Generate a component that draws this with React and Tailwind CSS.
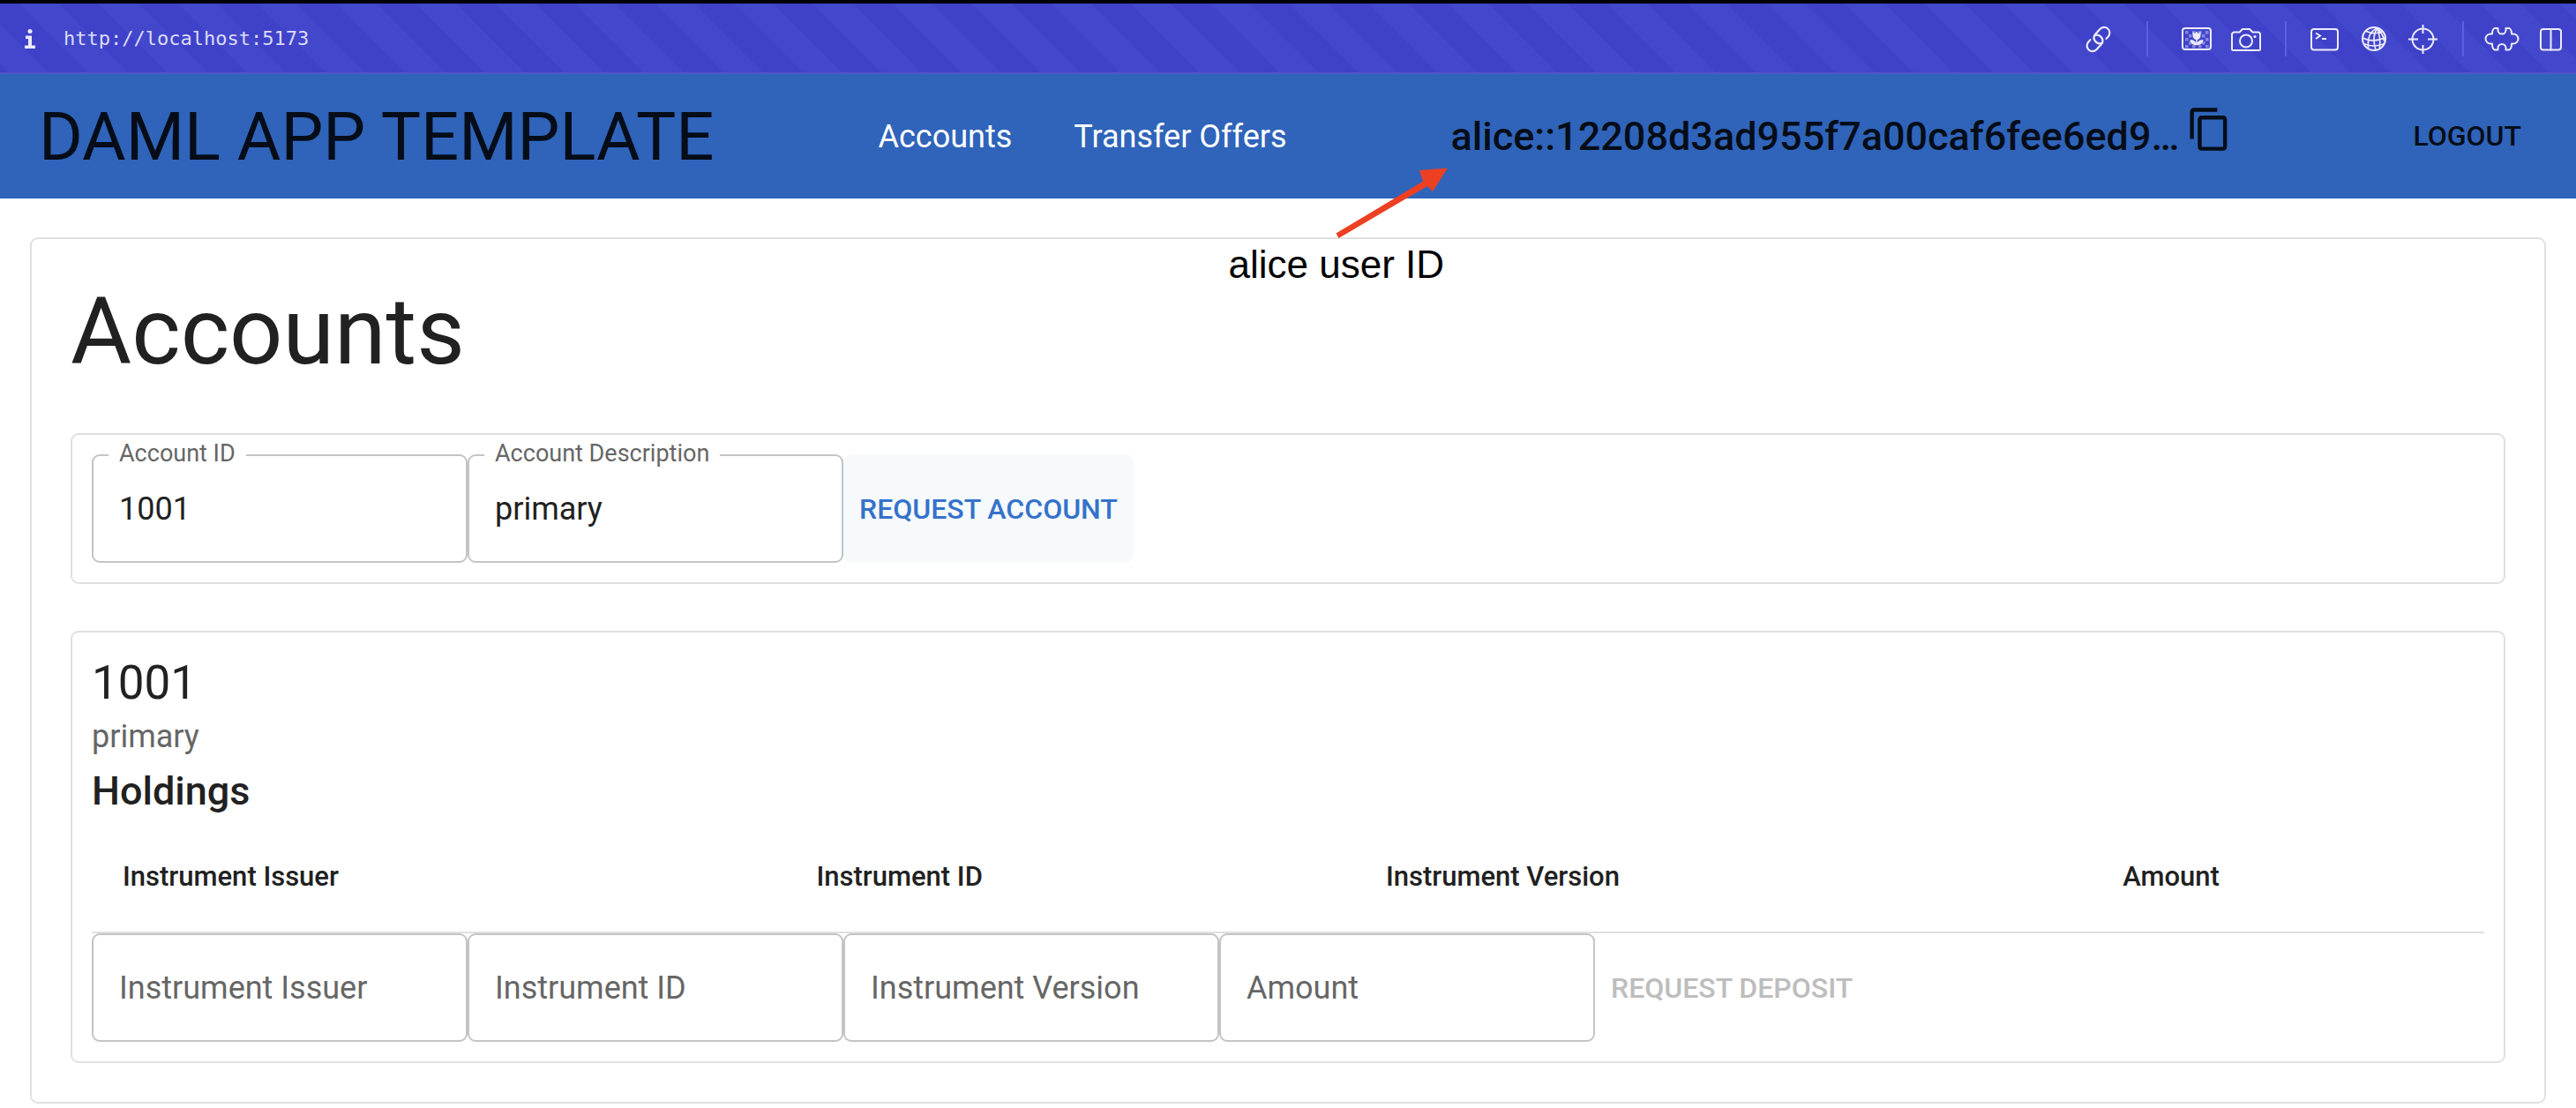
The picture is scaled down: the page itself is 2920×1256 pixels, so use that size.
import React from "react";

function ToolButton({ label, width, className = "", children }) {
  return (
    <button type="button" aria-label={label} className={"shrink-0 " + className}>
      <svg
        width={width}
        height="34"
        viewBox={`0 0 ${width} 34`}
        fill="none"
        stroke="currentColor"
        strokeWidth="2"
        strokeLinecap="round"
        strokeLinejoin="round"
        className="block overflow-visible"
      >
        {children}
      </svg>
    </button>
  );
}

function Divider() {
  return <span className="h-10 w-0.5 shrink-0 bg-[#5b60e3]" />;
}

const checkers = [
  [4, 8], [12, 8], [19, 8], [27, 8],
  [8, 12], [23, 12],
  [4, 16], [27, 16],
  [8, 20], [23, 20],
  [4, 24], [12, 24], [19, 24], [27, 24],
];

function BrowserBar() {
  return (
    <div className="border-t-4 border-black">
      <div className="flex h-20 items-center justify-between border-b-2 border-[#4f55cb] bg-[linear-gradient(45deg,#4347cc_25%,#3f42c8_25%_50%,#4347cc_50%_75%,#3f42c8_75%)] bg-[length:90px_90px] bg-[position:left_10px_bottom_0px] pt-0.5 pr-4 pl-7 text-[#ecebfc]">
        <div className="flex items-center gap-8">
          <svg width="12" height="24" viewBox="0 0 12 24" fill="currentColor" role="img" aria-label="Site information">
            <circle cx="6" cy="3.4" r="2.5" />
            <path d="M1 8.5h7v11h4V23H0v-3.500h4V12H1z" />
          </svg>
          <span className="font-['DejaVu_Sans_Mono',monospace] text-[22px] leading-8 text-[#dcdbf9]">
            http://localhost:5173
          </span>
        </div>

        <div className="flex items-center">
          <ToolButton label="Copy link" width={29} className="mr-10">
            <g transform="translate(14.500 17.500) rotate(-48)" strokeWidth="2.200">
              <path d="M-6.500 -6.300H-9.800A6.300 6.300 0 0 0 -9.800 6.300H-2A6.300 6.300 0 0 0 0 -5.900" />
              <path d="M6.500 6.300H9.800A6.300 6.300 0 0 0 9.800 -6.300H2A6.300 6.300 0 0 0 0 5.900" />
            </g>
          </ToolButton>
          <Divider />
          <ToolButton label="Toggle images" width={34} className="mr-[22px] ml-[38px]">
            <rect x="1" y="5" width="32" height="24" rx="3" />
            <g fill="currentColor" stroke="none">
              <g opacity="0.4">
                {checkers.map(([x, y]) => (
                  <rect key={`${x}-${y}`} x={x} y={y} width="3.500" height="3.500" />
                ))}
              </g>
              <path d="M12.500 9l2.500 2 2-2.500 2 2.500 2.500-2v4.500a4.500 4.500 0 0 1-9 0z" />
              <path d="M16.200 16h1.600v5.500c1-2.500 3.500-3.500 6.700-3.500-.5 4-3 6-6.700 6.200h-1.600C12.500 24 10 22 9.500 18c3.200 0 5.700 1 6.700 3.500z" />
            </g>
          </ToolButton>
          <ToolButton label="Take screenshot" width={34} className="mr-[27px]">
            <path d="M3.500 9.500H9.500L13 6h8l3.500 3.500h6A2.500 2.500 0 0 1 33 12v16.500A1.500 1.500 0 0 1 31.500 30h-29A1.500 1.500 0 0 1 1 28.500V12A2.500 2.500 0 0 1 3.500 9.500z" />
            <circle cx="17" cy="19.500" r="7" />
            <circle cx="27" cy="14.500" r="1.600" fill="currentColor" stroke="none" />
          </ToolButton>
          <Divider />
          <ToolButton label="Open console" width={32} className="mr-[26px] ml-[27px]">
            <rect x="1" y="6" width="30" height="23.500" rx="3" />
            <path d="M6 10.500l5 3-5 3.500M13 17h5" strokeLinecap="butt" strokeLinejoin="miter" />
          </ToolButton>
          <ToolButton label="Network" width={28} className="mr-[25px]">
            <circle cx="14" cy="17" r="13" />
            <path strokeWidth="1.700" d="M17.500 5C10 8 6.500 15 7.500 27M17.500 5c-4 6-4.500 15-1.500 25M17.500 5c2 5 4 13 3 22M17.500 5c4 3 7 8 8 14M5.500 8.500c5 2.500 12 2.500 17 .5M1.500 16c7 4 17 4 25-.5M3.500 23c6 2.500 14 2.500 21 0" />
          </ToolButton>
          <ToolButton label="Inspect element" width={33} className="mr-7">
            <circle cx="16.500" cy="17.500" r="12" />
            <path strokeLinecap="butt" d="M16.500 1v10M16.500 24v10M0 17.500h11M22 17.500h11" />
          </ToolButton>
          <Divider />
          <ToolButton label="Extensions" width={38} className="mx-6">
            <path d="M14.500 5H10.500Q8 6.500 8 11.500H6A5.500 5.500 0 0 0 6 22.500H8Q8 28.500 11 29.500H14.500V27.500A4.300 4.300 0 0 1 23.500 27.500V29.500H27Q30 28.500 30 22.500H32A5.500 5.500 0 0 0 32 11.500H30Q30 6.500 27.500 5H23.500V7A4.300 4.300 0 0 1 14.500 7z" />
          </ToolButton>
          <ToolButton label="Toggle panel" width={25}>
            <rect x="1" y="6" width="23" height="23.500" rx="3" />
            <path d="M12.500 6v23.500" />
          </ToolButton>
        </div>
      </div>
    </div>
  );
}

function Annotation() {
  return (
    <div className="pointer-events-none absolute top-[67px] right-full w-64">
      <svg width="256" height="88" viewBox="0 0 256 88" fill="#ed4023" className="block overflow-visible" aria-hidden="true">
        <path d="M125.500 77.500L224 18.500L220 6L252 3.500L235 30L229 24L128.500 83z" />
      </svg>
      <p className="pl-1 font-['Liberation_Sans',sans-serif] text-[44px] leading-[50px] font-normal whitespace-nowrap text-black">
        alice user ID
      </p>
    </div>
  );
}

function AppHeader() {
  return (
    <header className="flex h-[141px] items-center justify-between bg-[#2f64ba] px-11 text-[#060d18]">
      <span className="text-[76px] leading-[88px]">DAML APP TEMPLATE</span>
      <nav className="flex gap-[70px] text-[36px] leading-[54px] text-white">
        <a href="#accounts">Accounts</a>
        <a href="#transfer-offers">Transfer Offers</a>
      </nav>
      <div className="relative flex items-start gap-2 text-[45px] leading-[70px] font-medium">
        <span>alice::12208d3ad955f7a00caf6fee6ed9…</span>
        <button type="button" aria-label="Copy user ID">
          <svg width="53" height="53" viewBox="0 0 24 24" fill="currentColor" className="block">
            <path d="M16 1H4c-1.100 0-2 .9-2 2v14h2V3h12V1zm3 4H8c-1.100 0-2 .9-2 2v14c0 1.100.9 2 2 2h11c1.100 0 2-.9 2-2V7c0-1.100-.9-2-2-2zm0 16H8V7h11v14z" />
          </svg>
        </button>
        <Annotation />
      </div>
      <button type="button" className="px-[18px] text-[32px] leading-[53px] font-medium">
        LOGOUT
      </button>
    </header>
  );
}

const fieldBox =
  "block h-[123px] w-[426px] rounded-[9px] border-2 border-[#c4c4c4] bg-transparent px-[29px] text-[36px] text-[#212121] placeholder:text-[#666] placeholder:opacity-100";

function FilledField({ id, label, value }) {
  return (
    <div className="relative">
      <input id={id} type="text" defaultValue={value} className={fieldBox} />
      <label htmlFor={id} className="absolute -top-4 left-[19px] bg-white px-3 text-[27px] leading-[30px] whitespace-nowrap text-[#666]">
        {label}
      </label>
    </div>
  );
}

function EmptyField({ label }) {
  return <input type="text" aria-label={label} placeholder={label} className={fieldBox} />;
}

const columns = [
  { name: "Instrument Issuer", width: "w-[29%]" },
  { name: "Instrument ID", width: "w-[23.8%]" },
  { name: "Instrument Version", width: "w-[30.8%]" },
  { name: "Amount", width: "w-[16.4%]" },
];

const card = "rounded-[9px] border-2 border-[#e0e0e0] ";

export default function App() {
  return (
    <div className="bg-white font-[Roboto,'Liberation_Sans',sans-serif] text-[#212121]">
      <BrowserBar />
      <AppHeader />
      <main className="px-[34px] pt-11 pb-1">
        <div className={card + "flex flex-col gap-[53px] p-11"}>
          <h1 className="text-[106px] leading-[123px]">Accounts</h1>

          <form className={card + "flex p-[22px]"}>
            <FilledField id="account-id" label="Account ID" value="1001" />
            <FilledField id="account-description" label="Account Description" value="primary" />
            <button type="button" className="rounded-[9px] bg-[#f6fafd] px-[18px] text-[32px] font-medium text-[#3572ca]">
              REQUEST ACCOUNT
            </button>
          </form>

          <section className={card + "p-[22px]"}>
            <h2 className="text-[53px] leading-[70px]">1001</h2>
            <p className="text-[36px] leading-[53px] text-[#666]">primary</p>
            <h3 className="text-[45px] leading-[70px] font-medium">Holdings</h3>
            <table className="w-full table-fixed border-collapse">
              <thead>
                <tr className="border-b-2 border-[#e0e0e0]">
                  {columns.map(({ name, width }) => (
                    <th key={name} scope="col" className={"p-[35px] text-left text-[31px] leading-[54px] font-medium whitespace-nowrap " + width}>
                      {name}
                    </th>
                  ))}
                </tr>
              </thead>
            </table>
            <form className="flex">
              {columns.map(({ name }) => (
                <EmptyField key={name} label={name} />
              ))}
              <button type="button" disabled className="px-[18px] text-[32px] font-medium text-[#bdbdbd]">
                REQUEST DEPOSIT
              </button>
            </form>
          </section>
        </div>
      </main>
    </div>
  );
}
